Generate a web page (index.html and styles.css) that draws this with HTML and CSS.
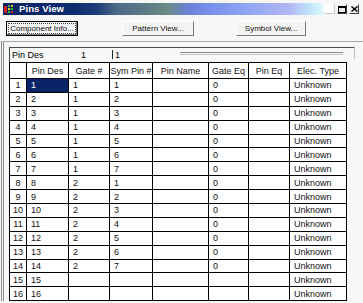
FILE: index.html
```html
<!DOCTYPE html>
<html>
<head>
<meta charset="utf-8">
<link rel="stylesheet" href="styles.css">
</head>
<body>
<div class="window">
  <div class="titlebar">
    <svg class="app-icon" width="11" height="9" viewBox="0 0 11 9">
      <rect x="0" y="1" width="3" height="7" fill="#d02020"/>
      <rect x="4" y="0" width="2" height="2" fill="#30c040"/>
      <rect x="7" y="0" width="2" height="2" fill="#e0d020"/>
      <rect x="4" y="3" width="2" height="2" fill="#e0d020"/>
      <rect x="7" y="3" width="2" height="2" fill="#30c040"/>
      <rect x="4" y="6" width="2" height="2" fill="#30c040"/>
      <rect x="7" y="6" width="2" height="2" fill="#d02020"/>
    </svg>
    <span class="title">Pins View</span>
    <div class="caption-btns">
      <div class="cbtn cbtn-min"></div>
      <div class="cbtn"><svg width="8" height="7" viewBox="0 0 8 7"><rect x="0.5" y="0.5" width="7" height="6" fill="none" stroke="#000"/><rect x="0" y="0" width="8" height="2" fill="#000"/></svg></div>
      <div class="cbtn"><svg width="7" height="6" viewBox="0 0 7 6"><path d="M0.5 0.5 L6.5 5.5 M6.5 0.5 L0.5 5.5" stroke="#000" stroke-width="1.4"/></svg></div>
    </div>
  </div>

  <div class="toolbar">
    <div class="btn btn-default"><span class="focus">Component Info...</span></div>
    <div class="btn btn-pattern"><span>Pattern View...</span></div>
    <div class="btn btn-symbol"><span>Symbol View...</span></div>
  </div>

  <div class="frame">
    <div class="pinrow">
      <span class="pin-label">Pin Des</span>
      <span class="pin-value">1</span>
      <div class="edit">
        <span class="caret"></span>
        <span class="edit-text">1</span>
        <span class="edit-line"></span>
      </div>
    </div>

    <div class="grid">
      <div class="c corner"></div>
      <div class="c h">Pin Des</div>
      <div class="c h">Gate #</div>
      <div class="c h">Sym Pin #</div>
      <div class="c h">Pin Name</div>
      <div class="c h">Gate Eq</div>
      <div class="c h">Pin Eq</div>
      <div class="c h">Elec. Type</div>

      <div class="c rh">1</div><div class="c sel">1</div><div class="c">1</div><div class="c">1</div><div class="c"></div><div class="c">0</div><div class="c"></div><div class="c">Unknown</div>
      <div class="c rh">2</div><div class="c">2</div><div class="c">1</div><div class="c">2</div><div class="c"></div><div class="c">0</div><div class="c"></div><div class="c">Unknown</div>
      <div class="c rh">3</div><div class="c">3</div><div class="c">1</div><div class="c">3</div><div class="c"></div><div class="c">0</div><div class="c"></div><div class="c">Unknown</div>
      <div class="c rh">4</div><div class="c">4</div><div class="c">1</div><div class="c">4</div><div class="c"></div><div class="c">0</div><div class="c"></div><div class="c">Unknown</div>
      <div class="c rh">5</div><div class="c">5</div><div class="c">1</div><div class="c">5</div><div class="c"></div><div class="c">0</div><div class="c"></div><div class="c">Unknown</div>
      <div class="c rh">6</div><div class="c">6</div><div class="c">1</div><div class="c">6</div><div class="c"></div><div class="c">0</div><div class="c"></div><div class="c">Unknown</div>
      <div class="c rh">7</div><div class="c">7</div><div class="c">1</div><div class="c">7</div><div class="c"></div><div class="c">0</div><div class="c"></div><div class="c">Unknown</div>
      <div class="c rh">8</div><div class="c">8</div><div class="c">2</div><div class="c">1</div><div class="c"></div><div class="c">0</div><div class="c"></div><div class="c">Unknown</div>
      <div class="c rh">9</div><div class="c">9</div><div class="c">2</div><div class="c">2</div><div class="c"></div><div class="c">0</div><div class="c"></div><div class="c">Unknown</div>
      <div class="c rh">10</div><div class="c">10</div><div class="c">2</div><div class="c">3</div><div class="c"></div><div class="c">0</div><div class="c"></div><div class="c">Unknown</div>
      <div class="c rh">11</div><div class="c">11</div><div class="c">2</div><div class="c">4</div><div class="c"></div><div class="c">0</div><div class="c"></div><div class="c">Unknown</div>
      <div class="c rh">12</div><div class="c">12</div><div class="c">2</div><div class="c">5</div><div class="c"></div><div class="c">0</div><div class="c"></div><div class="c">Unknown</div>
      <div class="c rh">13</div><div class="c">13</div><div class="c">2</div><div class="c">6</div><div class="c"></div><div class="c">0</div><div class="c"></div><div class="c">Unknown</div>
      <div class="c rh">14</div><div class="c">14</div><div class="c">2</div><div class="c">7</div><div class="c"></div><div class="c">0</div><div class="c"></div><div class="c">Unknown</div>
      <div class="c rh">15</div><div class="c">15</div><div class="c"></div><div class="c"></div><div class="c"></div><div class="c"></div><div class="c"></div><div class="c">Unknown</div>
      <div class="c rh">16</div><div class="c">16</div><div class="c"></div><div class="c"></div><div class="c"></div><div class="c"></div><div class="c"></div><div class="c">Unknown</div>
    </div>
  </div>
</div>
</body>
</html>
```

FILE: styles.css
```css
html, body {
  margin: 0;
  padding: 0;
}
body {
  width: 363px;
  height: 303px;
  overflow: hidden;
  background: #f7f7f7;
  font-family: "Liberation Sans", Arial, sans-serif;
  color: #000;
}
.window {
  width: 363px;
  height: 303px;
}

/* Title bar */
.titlebar {
  margin: 3px 3px 0 3px;
  height: 12px;
  display: flex;
  align-items: center;
  background: linear-gradient(90deg,
    #0b2468 0%, #0e2a6e 20%, #1c3b78 26%, #4e6a88 32%,
    #5c7a86 40%, #6a8a84 46%, #6a80d8 52%, #7890ec 58%,
    #94a8f4 70%, #b2b6f4 80%, #c0e6f8 86%, #d8f6fa 89%, #f4f8f8 90%, #f4f6f6 100%);
}
.app-icon {
  margin-left: 1px;
  flex: none;
}
.title {
  margin-left: 4px;
  color: #fff;
  font-weight: bold;
  font-size: 9.5px;
  line-height: 12px;
  letter-spacing: 0.1px;
}
.caption-btns {
  margin-left: auto;
  display: flex;
  gap: 2px;
  margin-right: 1px;
}
.cbtn {
  width: 10px;
  height: 10px;
  box-sizing: border-box;
  background: #ececec;
  border: 1px solid;
  border-color: #ffffff #404040 #404040 #ffffff;
  display: flex;
  align-items: center;
  justify-content: center;
}
.cbtn-min {
  width: 11px;
  background: #ffffff;
  border-color: #ffffff #c8c8c8 #c8c8c8 #ffffff;
}

/* Toolbar buttons */
.toolbar {
  display: flex;
  padding: 6px 0 5px 6px;
}
.btn {
  height: 15px;
  box-sizing: border-box;
  background: #f4f4f4;
  border: 1px solid;
  border-color: #ffffff #7a7a7a #7a7a7a #ffffff;
  display: flex;
  align-items: center;
  justify-content: center;
  font-size: 8px;
  color: #111;
  white-space: nowrap;
}
.btn-default {
  width: 72px;
  border: 1px solid #000;
  box-shadow: inset -1px -1px 0 #808080;
}
.btn-default .focus {
  border: 1px dotted #444;
  padding: 0 1px;
  line-height: 9px;
}
.btn-pattern {
  width: 72px;
  margin-left: 44px;
}
.btn-symbol {
  width: 70px;
  margin-left: 42px;
}

/* Frame */
.frame {
  margin-left: 1px;
  border-top: 1px solid #a8a8a8;
  border-left: 3px double #8c8c8c;
  padding: 5px 0 0 5px;
}
.pinrow {
  width: 346px;
  height: 15px;
  box-sizing: border-box;
  border-top: 1px solid #4a4a4a;
  border-left: 1px solid #404040;
  display: flex;
  align-items: center;
  font-size: 9px;
}
.pin-label {
  width: 71px;
  padding-left: 2px;
  box-sizing: border-box;
  flex: none;
}
.pin-value {
  width: 31px;
  flex: none;
}
.edit {
  flex: 1;
  align-self: stretch;
  display: flex;
  align-items: center;
  border-right: 1px solid #bcbcbc;
  margin-top: -2px;
  margin-bottom: 3px;
}
.caret {
  width: 1px;
  height: 9px;
  background: #222;
  margin-right: 2px;
  margin-top: 4px;
}
.edit-text {
  margin-top: 4px;
}
.edit-line {
  margin-left: auto;
  margin-right: 11px;
  width: 163px;
  height: 1px;
  border-top: 1px solid #8a8a8a;
  border-bottom: 1px solid #c4c4c4;
  align-self: flex-start;
  margin-top: 6px;
}

/* Grid */
.grid {
  display: grid;
  width: max-content;
  grid-template-columns: 16px 41px 40px 42px 55px 39px 40px 56px;
  grid-template-rows: 15px repeat(16, 12.9px);
  gap: 1px;
  padding: 1px;
  background: #000;
  font-size: 9px;
}
.c {
  background: #ffffff;
  display: flex;
  align-items: center;
  padding-left: 4px;
  white-space: nowrap;
  overflow: hidden;
  color: #111;
}
.h, .rh, .corner {
  justify-content: center;
  padding-left: 0;
}
.sel {
  background: #0a246a;
  color: #fff;
}
```
